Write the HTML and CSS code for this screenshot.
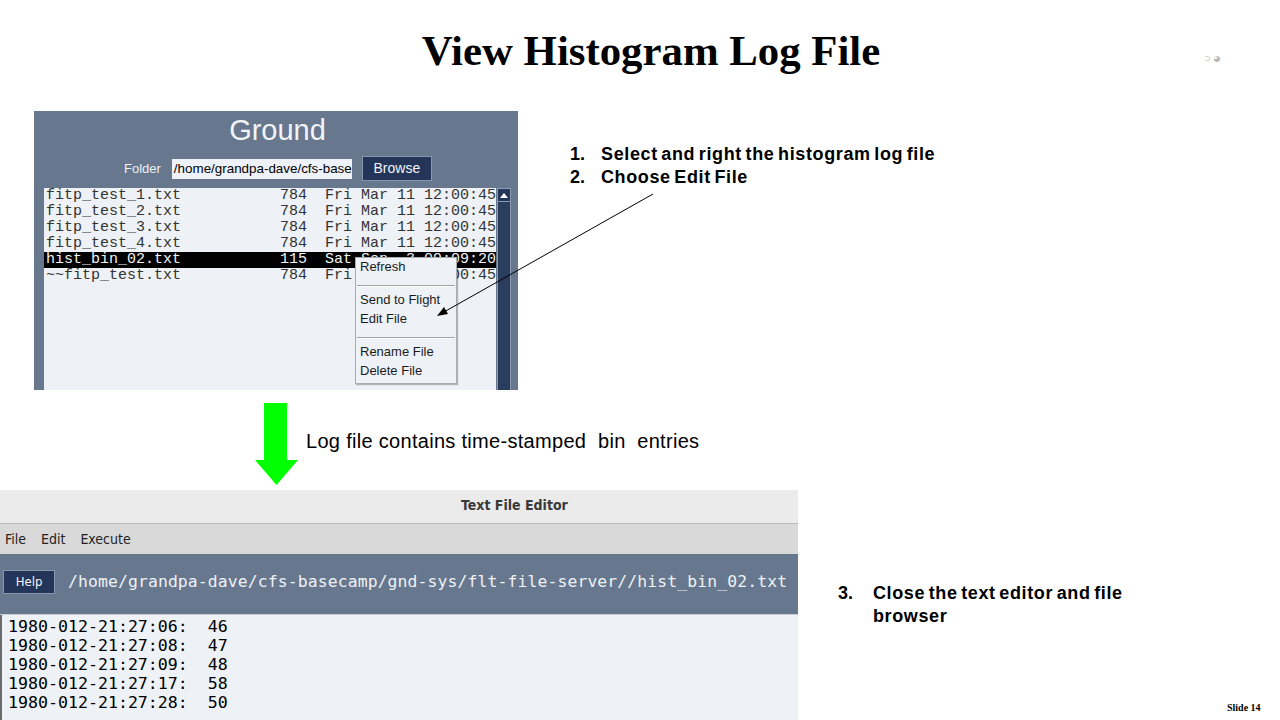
FILE: index.html
```html
<!DOCTYPE html>
<html>
<head>
<meta charset="utf-8">
<title>View Histogram Log File</title>
<link rel="stylesheet" href="styles.css">
</head>
<body>
<div class="slide">
  <h1 class="title">View Histogram Log File</h1>
  <div class="corner-mark">&#x2283; &#x025D5;</div>

  <section class="ground">
    <div class="ground-title">Ground</div>
    <div class="folder-row">
      <span class="folder-label">Folder</span>
      <div class="folder-input">/home/grandpa-dave/cfs-basecamp</div>
      <div class="browse">Browse</div>
    </div>
    <div class="list-wrap">
      <div class="file-list">
        <div class="row">fitp_test_1.txt           784  Fri Mar 11 12:00:45</div>
        <div class="row">fitp_test_2.txt           784  Fri Mar 11 12:00:45</div>
        <div class="row">fitp_test_3.txt           784  Fri Mar 11 12:00:45</div>
        <div class="row">fitp_test_4.txt           784  Fri Mar 11 12:00:45</div>
        <div class="row selected">hist_bin_02.txt           115  Sat Sep  3 09:09:20</div>
        <div class="row">~~fitp_test.txt           784  Fri Mar 11 12:00:45</div>
      </div>
      <div class="scrollbar"><div class="scroll-up"></div></div>
    </div>
    <div class="context-menu">
      <div class="menu-item">Refresh</div>
      <div class="menu-sep"></div>
      <div class="menu-item">Send to Flight</div>
      <div class="menu-item">Edit File</div>
      <div class="menu-sep"></div>
      <div class="menu-item">Rename File</div>
      <div class="menu-item">Delete File</div>
    </div>
  </section>

  <div class="steps steps-top">
    <div class="step"><span class="num">1.</span><span>Select and right the histogram log file</span></div>
    <div class="step"><span class="num">2.</span><span>Choose Edit File</span></div>
  </div>

  <svg class="pointer" width="1280" height="720" viewBox="0 0 1280 720">
    <line x1="653" y1="194" x2="444" y2="312" stroke="#000" stroke-width="1"/>
    <polygon points="437,316 444,307 448,314" fill="#000"/>
  </svg>

  <svg class="green-arrow" width="44" height="83" viewBox="0 0 44 83">
    <polygon points="9,0 32,0 32,57 43,57 21.5,82 0,57 9,57" fill="#00ff00"/>
  </svg>
  <div class="caption">Log file contains time-stamped&nbsp; bin&nbsp; entries</div>

  <section class="editor">
    <div class="editor-titlebar">Text File Editor</div>
    <div class="editor-menu">
      <span>File</span><span>Edit</span><span>Execute</span>
    </div>
    <div class="editor-pathbar">
      <div class="help-btn">Help</div>
      <div class="path">/home/grandpa-dave/cfs-basecamp/gnd-sys/flt-file-server//hist_bin_02.txt</div>
    </div>
    <div class="editor-text">
      <div class="line">1980-012-21:27:06:  46</div>
      <div class="line">1980-012-21:27:08:  47</div>
      <div class="line">1980-012-21:27:09:  48</div>
      <div class="line">1980-012-21:27:17:  58</div>
      <div class="line">1980-012-21:27:28:  50</div>
    </div>
  </section>

  <div class="steps steps-bottom">
    <div class="step"><span class="num num3">3.</span><span>Close the text editor and file<br>browser</span></div>
  </div>

  <div class="slide-num">Slide 14</div>
</div>
</body>
</html>
```

FILE: styles.css
```css
html, body {
  margin: 0;
  padding: 0;
  background: #ffffff;
}
.slide {
  position: relative;
  width: 1280px;
  height: 720px;
  overflow: hidden;
  background: #ffffff;
}
.title {
  position: absolute;
  left: 0;
  top: 30px;
  width: 1302px;
  margin: 0;
  text-align: center;
  font-family: "Liberation Serif", "Times New Roman", serif;
  font-weight: bold;
  font-size: 42.8px;
  line-height: 42px;
  color: #000;
}
.corner-mark {
  position: absolute;
  left: 1204px;
  top: 54px;
  font-family: "DejaVu Sans", sans-serif;
  font-size: 8px;
  color: #b8b8b8;
}

/* Ground file browser */
.ground {
  position: absolute;
  left: 34px;
  top: 111px;
  width: 484px;
  height: 279px;
  background: #66778e;
  padding: 0 7px 0 10px;
  box-sizing: border-box;
  display: flex;
  flex-direction: column;
  font-family: "Liberation Sans", Arial, sans-serif;
}
.ground-title {
  flex: none;
  height: 38px;
  line-height: 38px;
  text-align: center;
  font-size: 29px;
  color: #f2f4f7;
}
.folder-row {
  flex: none;
  margin-top: 7px;
  height: 25px;
  display: flex;
  align-items: center;
  padding-left: 80px;
}
.folder-label {
  font-size: 13px;
  color: #eef0f3;
  margin-right: 11px;
}
.folder-input {
  width: 178px;
  height: 20px;
  line-height: 20px;
  background: #eef2f8;
  font-size: 13.4px;
  color: #000;
  padding-left: 2px;
  white-space: nowrap;
  overflow: hidden;
  margin-right: 10px;
}
.browse {
  width: 68px;
  height: 23px;
  line-height: 23px;
  border: 1px solid #8797ad;
  background: #24355a;
  color: #f2f4f7;
  font-size: 14px;
  text-align: center;
}
.list-wrap {
  margin-top: 7px;
  flex: 1;
  display: flex;
  min-height: 0;
}
.file-list {
  width: 452px;
  background: #eef2f7;
}
.row {
  height: 16px;
  line-height: 16px;
  padding-left: 2px;
  white-space: pre;
  font-family: "Liberation Mono", "Courier New", monospace;
  font-size: 15px;
  color: #333;
}
.row.selected {
  background: #000;
  color: #f4f4f4;
}
.scrollbar {
  width: 13px;
  margin-left: 1px;
  background: #2b3d5c;
  border: 1px solid #8a99ae;
  border-bottom: none;
}
.scroll-up {
  height: 11px;
  margin: 1px 0;
  background: #24355a;
  border-bottom: 1px solid #8a99ae;
  position: relative;
}
.scroll-up::after {
  content: "";
  position: absolute;
  left: 2px;
  top: 3px;
  border-left: 4.5px solid transparent;
  border-right: 4.5px solid transparent;
  border-bottom: 5px solid #ffffff;
}

/* context menu */
.context-menu {
  position: absolute;
  left: 321px;
  top: 146px;
  width: 100px;
  padding-bottom: 2px;
  background: #eef2f7;
  border: 1px solid #a9abae;
  box-shadow: 1px 1px 1px rgba(0,0,0,0.25);
  font-family: "Liberation Sans", Arial, sans-serif;
  font-size: 13px;
  color: #1a1a1a;
}
.menu-item {
  height: 19px;
  line-height: 18px;
  padding-left: 4px;
  white-space: nowrap;
}
.menu-sep {
  height: 14px;
  position: relative;
}
.menu-sep::after {
  content: "";
  position: absolute;
  left: 1px;
  right: 1px;
  top: 8px;
  height: 1px;
  background: #9fa3a8;
  border-bottom: 1px solid #ffffff;
}

.pointer {
  position: absolute;
  left: 0;
  top: 0;
  pointer-events: none;
}

/* step text */
.steps {
  position: absolute;
  font-family: "Liberation Sans", Arial, sans-serif;
  font-weight: bold;
  font-size: 18px;
  line-height: 23px;
  letter-spacing: 0.62px;
  word-spacing: -2px;
  color: #000;
}
.steps-top {
  left: 570px;
  top: 143px;
}
.steps-bottom {
  left: 838px;
  top: 582px;
}
.step {
  display: flex;
}
.num {
  width: 31px;
  flex: none;
  letter-spacing: 0;
}
.num3 {
  width: 35px;
}

.green-arrow {
  position: absolute;
  left: 255px;
  top: 403px;
}
.caption {
  position: absolute;
  left: 306px;
  top: 429px;
  font-family: "Liberation Sans", Arial, sans-serif;
  font-size: 20px;
  line-height: 24px;
  letter-spacing: 0.3px;
  color: #000;
  white-space: nowrap;
}

/* editor window */
.editor {
  position: absolute;
  left: 0;
  top: 490px;
  width: 798px;
  height: 230px;
  overflow: hidden;
  display: flex;
  flex-direction: column;
  background: #eef2f7;
}
.editor-titlebar {
  flex: none;
  height: 34px;
  line-height: 31px;
  padding-left: 461px;
  background: #ebebeb;
  border-bottom: 1px solid #bcbcbc;
  box-sizing: border-box;
  font-family: "DejaVu Sans Condensed", "DejaVu Sans", sans-serif;
  font-stretch: condensed;
  font-weight: bold;
  font-size: 14px;
  color: #3a3a3a;
  white-space: nowrap;
}
.editor-menu {
  flex: none;
  height: 30px;
  background: #d9d9d9;
  display: flex;
  align-items: center;
  gap: 15px;
  padding-left: 5px;
  font-family: "DejaVu Sans Condensed", "DejaVu Sans", sans-serif;
  font-stretch: condensed;
  font-size: 14px;
  color: #222;
}
.editor-pathbar {
  flex: none;
  height: 61px;
  background: #66778e;
  display: flex;
  align-items: flex-start;
  padding: 16px 0 0 3px;
  box-sizing: border-box;
  gap: 13px;
  border-bottom: 1px solid #c9ccd0;
}
.help-btn {
  width: 50px;
  height: 22px;
  line-height: 21px;
  background: #24355a;
  border: 1px solid #8797ad;
  color: #f2f4f7;
  text-align: center;
  font-family: "DejaVu Sans Condensed", "DejaVu Sans", sans-serif;
  font-stretch: condensed;
  font-size: 13px;
}
.path {
  font-family: "DejaVu Sans Mono", monospace;
  font-size: 16.4px;
  line-height: 23px;
  letter-spacing: 0.12px;
  color: #eef2f7;
  white-space: nowrap;
}
.editor-text {
  flex: 1;
  background: #eef2f7;
  border-left: 2px solid #6b6b6b;
  padding: 2px 0 0 6px;
  font-family: "DejaVu Sans Mono", monospace;
  font-size: 16.6px;
  line-height: 19px;
  color: #000;
}
.line {
  white-space: pre;
  height: 19px;
}

.slide-num {
  position: absolute;
  left: 1227px;
  top: 702px;
  font-family: "Liberation Serif", "Times New Roman", serif;
  font-weight: bold;
  font-size: 10px;
  color: #000;
}
```
